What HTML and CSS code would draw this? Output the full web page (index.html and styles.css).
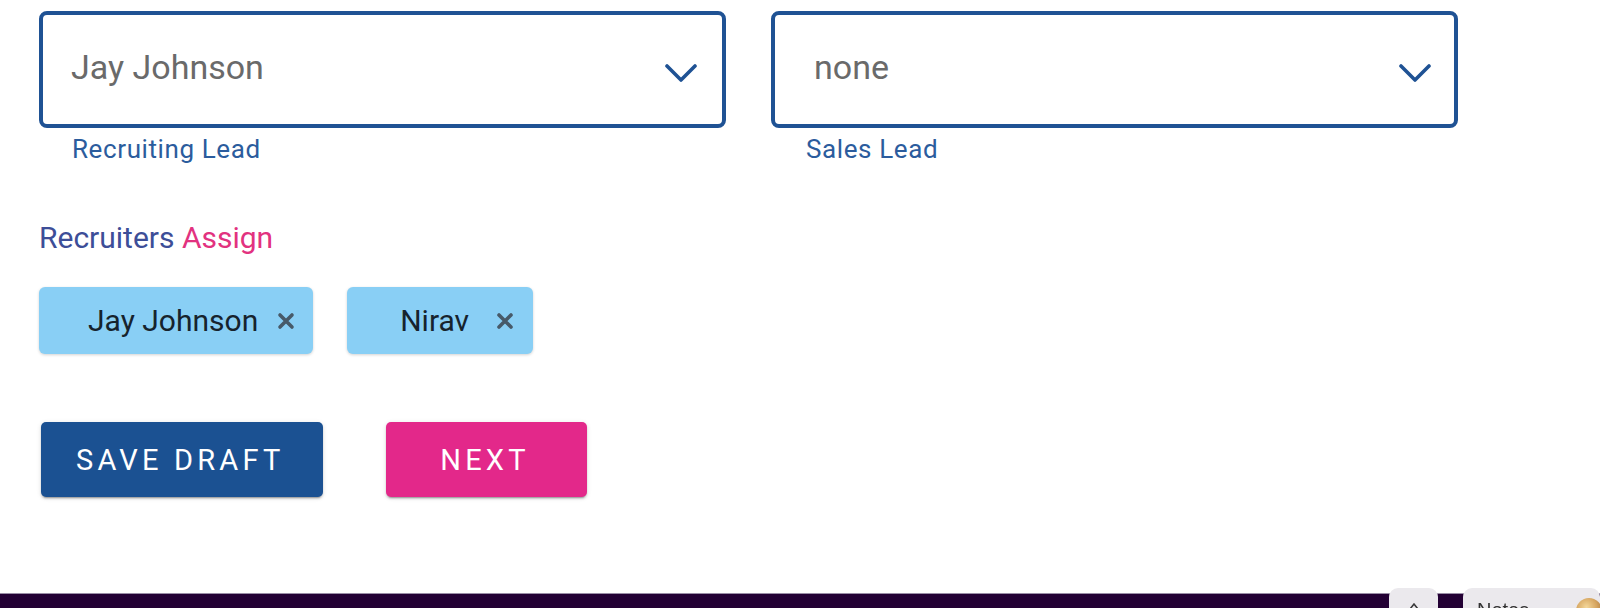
FILE: index.html
```html
<!DOCTYPE html>
<html lang="en">
<head>
<meta charset="utf-8">
<title>Assign leads</title>
<link rel="stylesheet" href="styles.css">
</head>
<body>
<main class="form">
  <div class="lead-row">
    <div class="field">
      <div class="select">
        <span class="select-value">Jay Johnson</span>
        <svg class="chevron" viewBox="0 0 32 18" width="32" height="18" aria-hidden="true"><path d="M2 2 L16 16 L30 2" fill="none" stroke="currentColor" stroke-width="3.6" stroke-linecap="round" stroke-linejoin="round"/></svg>
      </div>
      <div class="helper">Recruiting Lead</div>
    </div>
    <div class="field">
      <div class="select select-wide">
        <span class="select-value">none</span>
        <svg class="chevron" viewBox="0 0 32 18" width="32" height="18" aria-hidden="true"><path d="M2 2 L16 16 L30 2" fill="none" stroke="currentColor" stroke-width="3.6" stroke-linecap="round" stroke-linejoin="round"/></svg>
      </div>
      <div class="helper">Sales Lead</div>
    </div>
  </div>

  <h2 class="section-title"><span class="title-main">Recruiters</span> <span class="title-accent">Assign</span></h2>

  <div class="chips">
    <div class="chip">
      <span class="chip-label">Jay Johnson</span>
      <svg class="chip-close" viewBox="0 0 18 18" width="18" height="18" aria-hidden="true"><path d="M3 3 L15 15 M15 3 L3 15" stroke="currentColor" stroke-width="3.6" stroke-linecap="round"/></svg>
    </div>
    <div class="chip chip-short">
      <span class="chip-label">Nirav</span>
      <svg class="chip-close" viewBox="0 0 18 18" width="18" height="18" aria-hidden="true"><path d="M3 3 L15 15 M15 3 L3 15" stroke="currentColor" stroke-width="3.6" stroke-linecap="round"/></svg>
    </div>
  </div>

  <div class="actions">
    <button class="btn btn-primary" type="button">Save Draft</button>
    <button class="btn btn-secondary" type="button">Next</button>
  </div>
</main>

<footer class="bottom-bar"></footer>

<div class="dock">
  <div class="dock-tab dock-toggle">
    <svg viewBox="0 0 14 10" width="14" height="10" aria-hidden="true"><path d="M1.5 9 L7 2 L12.5 9" fill="none" stroke="#3a3a3a" stroke-width="1.6"/></svg>
  </div>
  <div class="dock-tab dock-notes">
    <span class="dock-text">Notes</span>
    <span class="dock-avatar"></span>
  </div>
</div>
</body>
</html>
```

FILE: styles.css
```css
html, body {
  margin: 0;
  padding: 0;
  background: #ffffff;
  font-family: Roboto, "Liberation Sans", Arial, sans-serif;
  overflow: hidden;
}

.form {
  padding: 11px 0 0 39px;
}

.lead-row {
  display: flex;
  gap: 45px;
}

.field {
  width: 687px;
}

.select {
  box-sizing: border-box;
  height: 117px;
  border: 4px solid #1f5294;
  border-radius: 8px;
  display: flex;
  align-items: center;
  justify-content: space-between;
  padding: 0 25px 0 28px;
}

.select-wide {
  padding-left: 39px;
  padding-right: 23px;
}

.select-value {
  font-size: 34px;
  line-height: 40px;
  color: #6a6a6a;
  margin-bottom: 6px;
}

.chevron {
  color: #1f5294;
  margin-top: 7px;
  flex: none;
}

.helper {
  margin: 6px 0 0 33px;
  font-size: 26px;
  line-height: 30px;
  letter-spacing: 0.6px;
  color: #2b5c9d;
}

.field + .field .helper {
  margin-left: 35px;
}

.section-title {
  margin: 56px 0 0 0;
  font-size: 30px;
  line-height: 36px;
  font-weight: 400;
}

.title-main {
  color: #3d4e98;
}

.title-accent {
  color: #e2327f;
}

.chips {
  margin-top: 31px;
  display: flex;
  gap: 34px;
}

.chip {
  box-sizing: border-box;
  height: 67px;
  display: flex;
  align-items: center;
  gap: 19px;
  padding: 0 18px 0 49px;
  background: #89cff5;
  border-radius: 6px;
  box-shadow: 0 1px 3px rgba(0, 0, 0, 0.18);
}

.chip-short {
  padding-left: 53px;
  padding-right: 19px;
  gap: 27px;
}

.chip-label {
  font-size: 30px;
  line-height: 34px;
  color: #16232d;
}

.chip-close {
  color: #475a69;
  flex: none;
}

.actions {
  margin: 68px 0 0 2px;
  display: flex;
  gap: 63px;
}

.btn {
  box-sizing: border-box;
  height: 75px;
  min-width: 201px;
  padding: 0 39px 0 35px;
  border: none;
  border-radius: 5px;
  font-family: Roboto, "Liberation Sans", Arial, sans-serif;
  font-size: 29px;
  font-weight: 400;
  letter-spacing: 4.2px;
  text-transform: uppercase;
  color: #ffffff;
  box-shadow: 0 3px 1px -2px rgba(0, 0, 0, 0.2), 0 2px 2px 0 rgba(0, 0, 0, 0.14), 0 1px 5px 0 rgba(0, 0, 0, 0.12);
}

.btn-primary {
  background: #1b5192;
}

.btn-secondary {
  background: #e3288a;
}

.bottom-bar {
  margin-top: 96px;
  height: 15px;
  box-sizing: border-box;
  border-top: 1px solid #9a8ea6;
  background: #230034;
}

.dock {
  position: fixed;
  left: 1389px;
  right: 0;
  bottom: 0;
  display: flex;
  gap: 25px;
  height: 20px;
}

.dock-tab {
  background: #ebe9ed;
  border-radius: 9px 9px 0 0;
  overflow: hidden;
  position: relative;
}

.dock-toggle {
  width: 49px;
  display: flex;
  justify-content: center;
  padding-top: 14px;
  box-sizing: border-box;
}

.dock-notes {
  flex: 1;
  padding: 12px 0 0 14px;
  box-sizing: border-box;
}

.dock-text {
  font-family: "Liberation Sans", Arial, sans-serif;
  font-size: 20px;
  line-height: 20px;
  color: #333333;
  display: block;
}

.dock-avatar {
  position: absolute;
  left: 113px;
  top: 10px;
  width: 26px;
  height: 26px;
  border-radius: 50%;
  background: radial-gradient(circle at 40% 35%, #f3d79a 0%, #d6a560 45%, #8c5a2a 100%);
}
```
